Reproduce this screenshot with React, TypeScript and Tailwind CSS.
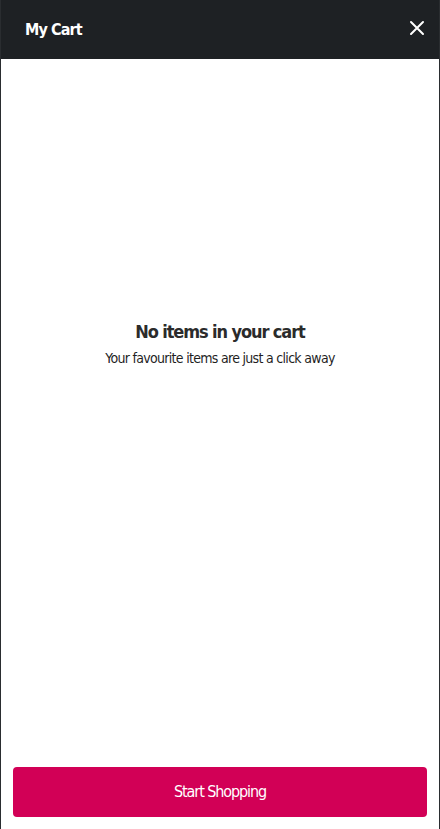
import React from "react";

export default function App() {
  const font = { fontFamily: '"DejaVu Sans Condensed", "Open Sans", sans-serif' };
  return (
    <div className="w-[440px] h-[829px] flex flex-col bg-white border-l border-r border-[#2a2d30] overflow-hidden" style={font}>
      <div className="h-[59px] bg-[#1e2124] flex items-center justify-between pl-[24px] pr-[14px] shrink-0">
        <span className="text-white font-bold text-[16px] tracking-[-0.9px]">My Cart</span>
        <svg width="16" height="16" viewBox="0 0 16 16" className="mt-[-4px]">
          <path d="M2 2 L14 14 M14 2 L2 14" stroke="white" strokeWidth="2" strokeLinecap="round" />
        </svg>
      </div>
      <div className="flex-1 flex flex-col items-center justify-center pb-[140px]">
        <div className="text-[#2b2b2b] font-bold text-[18px] tracking-[-1.1px] leading-[26px]">No items in your cart</div>
        <div className="text-[#1f1f1f] text-[14px] tracking-[-0.7px] leading-[20px] mt-[3px]">Your favourite items are just a click away</div>
      </div>
      <div className="px-[12px] pb-[12px] shrink-0">
        <button className="w-full h-[50px] bg-[#d20056] rounded-[4px] text-white text-[16px] tracking-[-1.1px]">Start Shopping</button>
      </div>
    </div>
  );
}
